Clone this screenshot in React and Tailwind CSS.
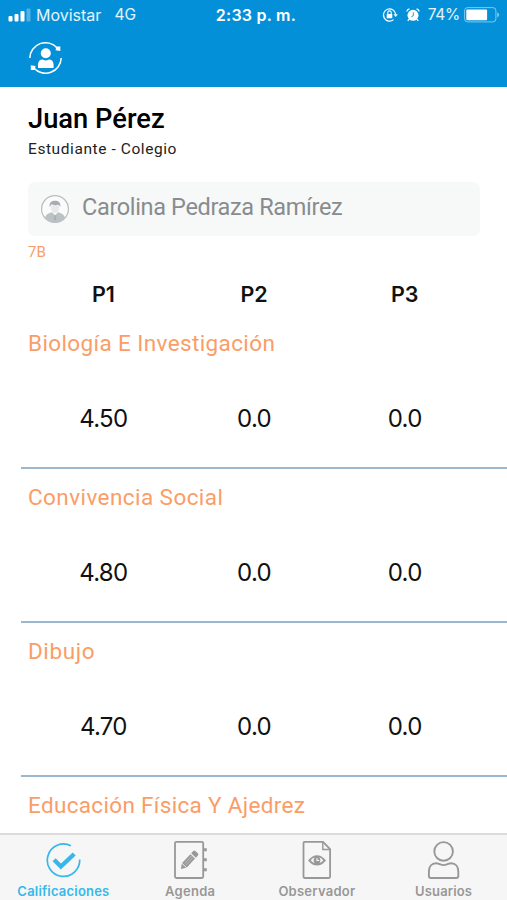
import React from "react";

const subjects = [
  { name: "Biología E Investigación", grades: ["4.50", "0.0", "0.0"], tracking: "tracking-[0.38px]" },
  { name: "Convivencia Social", grades: ["4.80", "0.0", "0.0"], tracking: "tracking-[0.43px]" },
  { name: "Dibujo", grades: ["4.70", "0.0", "0.0"], tracking: "tracking-[0.6px]" },
];

function SignalBars() {
  return (
    <svg width="23" height="14" viewBox="0 0 23 14" fill="#fff">
      <rect x="0.5" y="8" width="4" height="5.5" rx="1" />
      <rect x="6.5" y="6" width="4" height="7.5" rx="1" />
      <rect x="12.5" y="3" width="4" height="10.5" rx="1" />
      <rect x="18.5" y="0.5" width="4" height="13" rx="1" opacity="0.3" />
    </svg>
  );
}

function RotationLock() {
  return (
    <svg width="16" height="16" viewBox="0 0 16 16" fill="none">
      <path d="M11.6 12.6A6.1 6.1 0 1 1 13.6 7.2" stroke="#fff" strokeWidth="1.2" />
      <path d="M11.5 7.2h4.3l-2.1 2.9z" fill="#fff" />
      <rect x="4.7" y="7" width="5.6" height="4.2" rx="0.5" fill="#fff" />
      <path d="M5.8 7V5.6a1.7 1.7 0 0 1 3.4 0V7" stroke="#fff" strokeWidth="1.1" />
    </svg>
  );
}

function Alarm() {
  return (
    <svg width="14" height="14" viewBox="0 0 14 14" fill="none">
      <circle cx="7" cy="7.3" r="5.5" fill="#fff" />
      <path d="M0.8 3.5Q1.2 1.2 3.5 0.8M13.2 3.5Q12.8 1.2 10.5 0.8" stroke="#fff" strokeWidth="1.3" />
      <path d="M3 11.2 1.8 12.8M11 11.2l1.2 1.6" stroke="#fff" strokeWidth="1.3" />
      <path d="M7.3 4.4v3.4L5.4 8.6" stroke="#0490d8" strokeWidth="0.9" />
    </svg>
  );
}

function Battery() {
  return (
    <svg width="36" height="16" viewBox="0 0 36 16" fill="none">
      <rect x="0.6" y="0.6" width="31.3" height="14.3" rx="3" stroke="#fff" strokeOpacity="0.5" />
      <rect x="2.3" y="2.4" width="20.8" height="10.8" rx="1" fill="#fff" />
      <path d="M33.2 5.2q2 1 2 2.6t-2 2.6z" fill="#fff" fillOpacity="0.5" />
    </svg>
  );
}

function SwitchUser() {
  return (
    <svg width="34" height="34" viewBox="0 0 34 34" fill="none">
      <path d="M1.8 17A15.7 15.7 0 0 1 29.2 6.9M33.2 17A15.7 15.7 0 0 1 5.8 27" stroke="#fff" strokeWidth="1.5" />
      <path d="M28.3 5.4h4v4.6l-4.7-.8z" fill="#fff" />
      <path d="M2.8 24.3l4.7.6-.7 4H2.8z" fill="#fff" />
      <circle cx="17.8" cy="12.3" r="5" fill="#fff" />
      <path d="M10 27v-3.3c0-3.3 2-5.2 4.8-5.2 2 1.2 4 1.2 6 0 2.8 0 4.8 1.9 4.8 5.2V27z" fill="#fff" />
    </svg>
  );
}

function Avatar() {
  return (
    <svg width="30" height="30" viewBox="0 0 30 30" fill="none">
      <circle cx="15" cy="15" r="13.4" fill="#fbfbfb" stroke="#b9bdbf" strokeWidth="1.2" />
      <path d="M5 24c.6-3.8 4-5 7-5.8l3 3 3-3c3 .8 6.4 2 7 5.8A13.2 13.2 0 0 1 5 24z" fill="#bcc2c4" />
      <path d="M11 11.5v2.7c0 2.5 1.8 4.7 4 4.7s4-2.2 4-4.7v-2.7z" fill="#e6e9ea" />
      <path d="M9.7 13c-.6-4.2 1.5-6.1 4.2-6.3 4-.3 7.2 1.2 6.4 6.3l-1.5-2.2c-2.6.6-5 .5-7.3-.5z" fill="#a6adb0" />
      <path d="M14.3 21h1.4l.6 5.5h-2.6z" fill="#aab1b4" />
    </svg>
  );
}

function GradesIcon() {
  return (
    <svg width="36" height="40" viewBox="-0.7 0 36 40" fill="none">
      <path d="M25.2 5.8A16.2 16.2 0 1 0 34 19.5" stroke="#37b8e9" strokeWidth="1.7" />
      <path d="M8.4 19.7l6.8 6.9L28.5 14" stroke="#37b8e9" strokeWidth="4.3" />
    </svg>
  );
}

function AgendaIcon() {
  return (
    <svg width="36" height="40" viewBox="-0.8 0 36 40" fill="none">
      <rect x="2.2" y="1.9" width="28.2" height="36.1" rx="1.4" stroke="#989898" strokeWidth="1.8" />
      <path d="M31 8.3h3v3h-3zM31 18.3h3v3h-3zM31 28.3h3v3h-3z" fill="#989898" />
      <g transform="translate(8.1 29) rotate(-47)" fill="#989898">
        <path d="M0 0 4.5-3v6z" />
        <path d="M5.2-3.2H17.3v6.4H5.2z" />
        <path d="M18.5-3.2h3q1.5 0 1.5 1.5v3.4q0 1.5-1.5 1.5h-3z" />
        <path d="M6.5-1H16.8M6.5 1H16.8" stroke="#d0d0d0" strokeWidth=".6" />
      </g>
    </svg>
  );
}

function ObserverIcon() {
  return (
    <svg width="36" height="40" viewBox="0 0 36 40" fill="none" stroke="#989898">
      <path d="M5.5 1.9H24l7.1 7.3v27.4q0 1.4-1.4 1.4H5.9q-1.4 0-1.4-1.4V3.3q0-1.4 1-1.4z" strokeWidth="1.8" />
      <path d="M23.8 2v7.5H31" strokeWidth="1.4" />
      <path d="M9 20.4q9-10.4 18 0-9 10.4-18 0z" fill="#989898" stroke="none" />
      <path d="M11.7 20.2q2.2-2.6 4-3-2.2 3.2 0 6.1-2.2-.6-4-3.1zM24.3 20.2q-2.2-2.6-4-3 2.2 3.2 0 6.1 2.2-.6 4-3.1z" fill="#f6f6f6" stroke="none" />
      <path d="M18 18.2v2.3h2.2" stroke="#f6f6f6" strokeWidth="1.2" />
    </svg>
  );
}

function UsersIcon() {
  return (
    <svg width="36" height="40" viewBox="0.4 0 36 40" fill="none" stroke="#989898" strokeWidth="1.9">
      <circle cx="18" cy="11.4" r="9.3" />
      <path d="M10.5 23.2c2.6 0 4.7 1.9 7.5 1.9s4.9-1.9 7.5-1.9c4.6 0 7.2 3.6 7.2 8.2V36q0 2-2 2H5.3q-2 0-2-2v-4.6c0-4.6 2.6-8.2 7.2-8.2z" />
    </svg>
  );
}

const tabs = [
  { label: "Calificaciones", Icon: GradesIcon, color: "text-[#37b8e9]", tracking: "tracking-[0.2px]" },
  { label: "Agenda", Icon: AgendaIcon, color: "text-[#989898]", tracking: "tracking-[0.3px]" },
  { label: "Observador", Icon: ObserverIcon, color: "text-[#989898]", tracking: "tracking-[0.25px]" },
  { label: "Usuarios", Icon: UsersIcon, color: "text-[#989898]", tracking: "tracking-[0.15px]" },
];

function SubjectName({ children, tracking }) {
  return (
    <h2 className={"ml-[7px] w-fit whitespace-nowrap font-['Roboto',sans-serif] text-[22.5px] leading-7 text-[#fa9d66] " + tracking}>
      {children}
    </h2>
  );
}

export default function App() {
  return (
    <div className="flex h-[900px] w-[507px] flex-col overflow-hidden bg-white font-['Inter',sans-serif] text-[#111]">
      <header className="h-[87px] shrink-0 bg-[#0490d8] text-white">
        <div className="grid h-[30px] grid-cols-[1fr_auto_1fr] items-center pr-[7px] pl-2 text-[16px]">
          <div className="flex items-center">
            <SignalBars />
            <span className="ml-[5px] text-white/90">Movistar</span>
            <span className="ml-[13px] text-[15.5px] text-white/90">4G</span>
          </div>
          <span className="pl-1 text-[16px] font-semibold tracking-[0.25px]">2:33 p. m.</span>
          <div className="flex items-center justify-end">
            <RotationLock />
            <span className="ml-2"><Alarm /></span>
            <span className="ml-2 text-[15.5px] tracking-[-0.3px] text-white/90">74%</span>
            <span className="ml-1"><Battery /></span>
          </div>
        </div>
        <div className="pt-[11px] pl-7">
          <SwitchUser />
        </div>
      </header>

      <main className="flex min-h-0 flex-1 flex-col overflow-hidden">
        <section className="pr-[27px] pl-7 pt-[15px] font-['Roboto',sans-serif]">
          <h1 className="w-fit text-[27.3px] leading-[34px] font-medium text-black">Juan Pérez</h1>
          <p className="mt-[3px] w-fit text-[15.5px] leading-5 tracking-[0.58px] text-[#222]">Estudiante - Colegio</p>
          <div className="mt-[23px] flex h-[54px] items-center rounded-[7px] bg-[#f7f8f8] pl-3">
            <Avatar />
            <span className="ml-[12px] pb-[3px] text-[23.5px] tracking-[-0.35px] text-[#888c8f]">Carolina Pedraza Ramírez</span>
          </div>
          <p className="mt-[6px] w-fit text-[15px] leading-5 text-[#fa9d66]">7B</p>
        </section>

        <div className="mt-[18px] ml-7 grid w-[452px] grid-cols-3 text-center text-[21.5px] leading-7 font-semibold tracking-[-0.2px] text-[#111]">
          <span>P1</span>
          <span>P2</span>
          <span>P3</span>
        </div>

        <div className="mt-[21px] ml-[21px]">
          {subjects.map((s) => (
            <section key={s.name} className="mb-[14px] h-[140px] border-b-2 border-[#9ab8cf]">
              <SubjectName tracking={s.tracking}>{s.name}</SubjectName>
              <div className="mt-[46px] ml-[7px] grid w-[452px] grid-cols-3 text-center text-[24px] leading-8 tracking-[-0.7px]">
                {s.grades.map((g, i) => (
                  <span key={i}>{g}</span>
                ))}
              </div>
            </section>
          ))}
          <SubjectName tracking="tracking-[0.33px]">Educación Física Y Ajedrez</SubjectName>
        </div>
      </main>

      <nav className="grid h-[67px] shrink-0 grid-cols-4 border-t-2 border-[#dcdcdc] bg-[#f6f6f6]">
        {tabs.map(({ label, Icon, color, tracking }) => (
          <div key={label} className={"flex flex-col items-center pt-[5px] " + color}>
            <Icon />
            <span className={"mt-[3px] text-[13px] leading-4 font-semibold " + tracking}>{label}</span>
          </div>
        ))}
      </nav>
    </div>
  );
}
